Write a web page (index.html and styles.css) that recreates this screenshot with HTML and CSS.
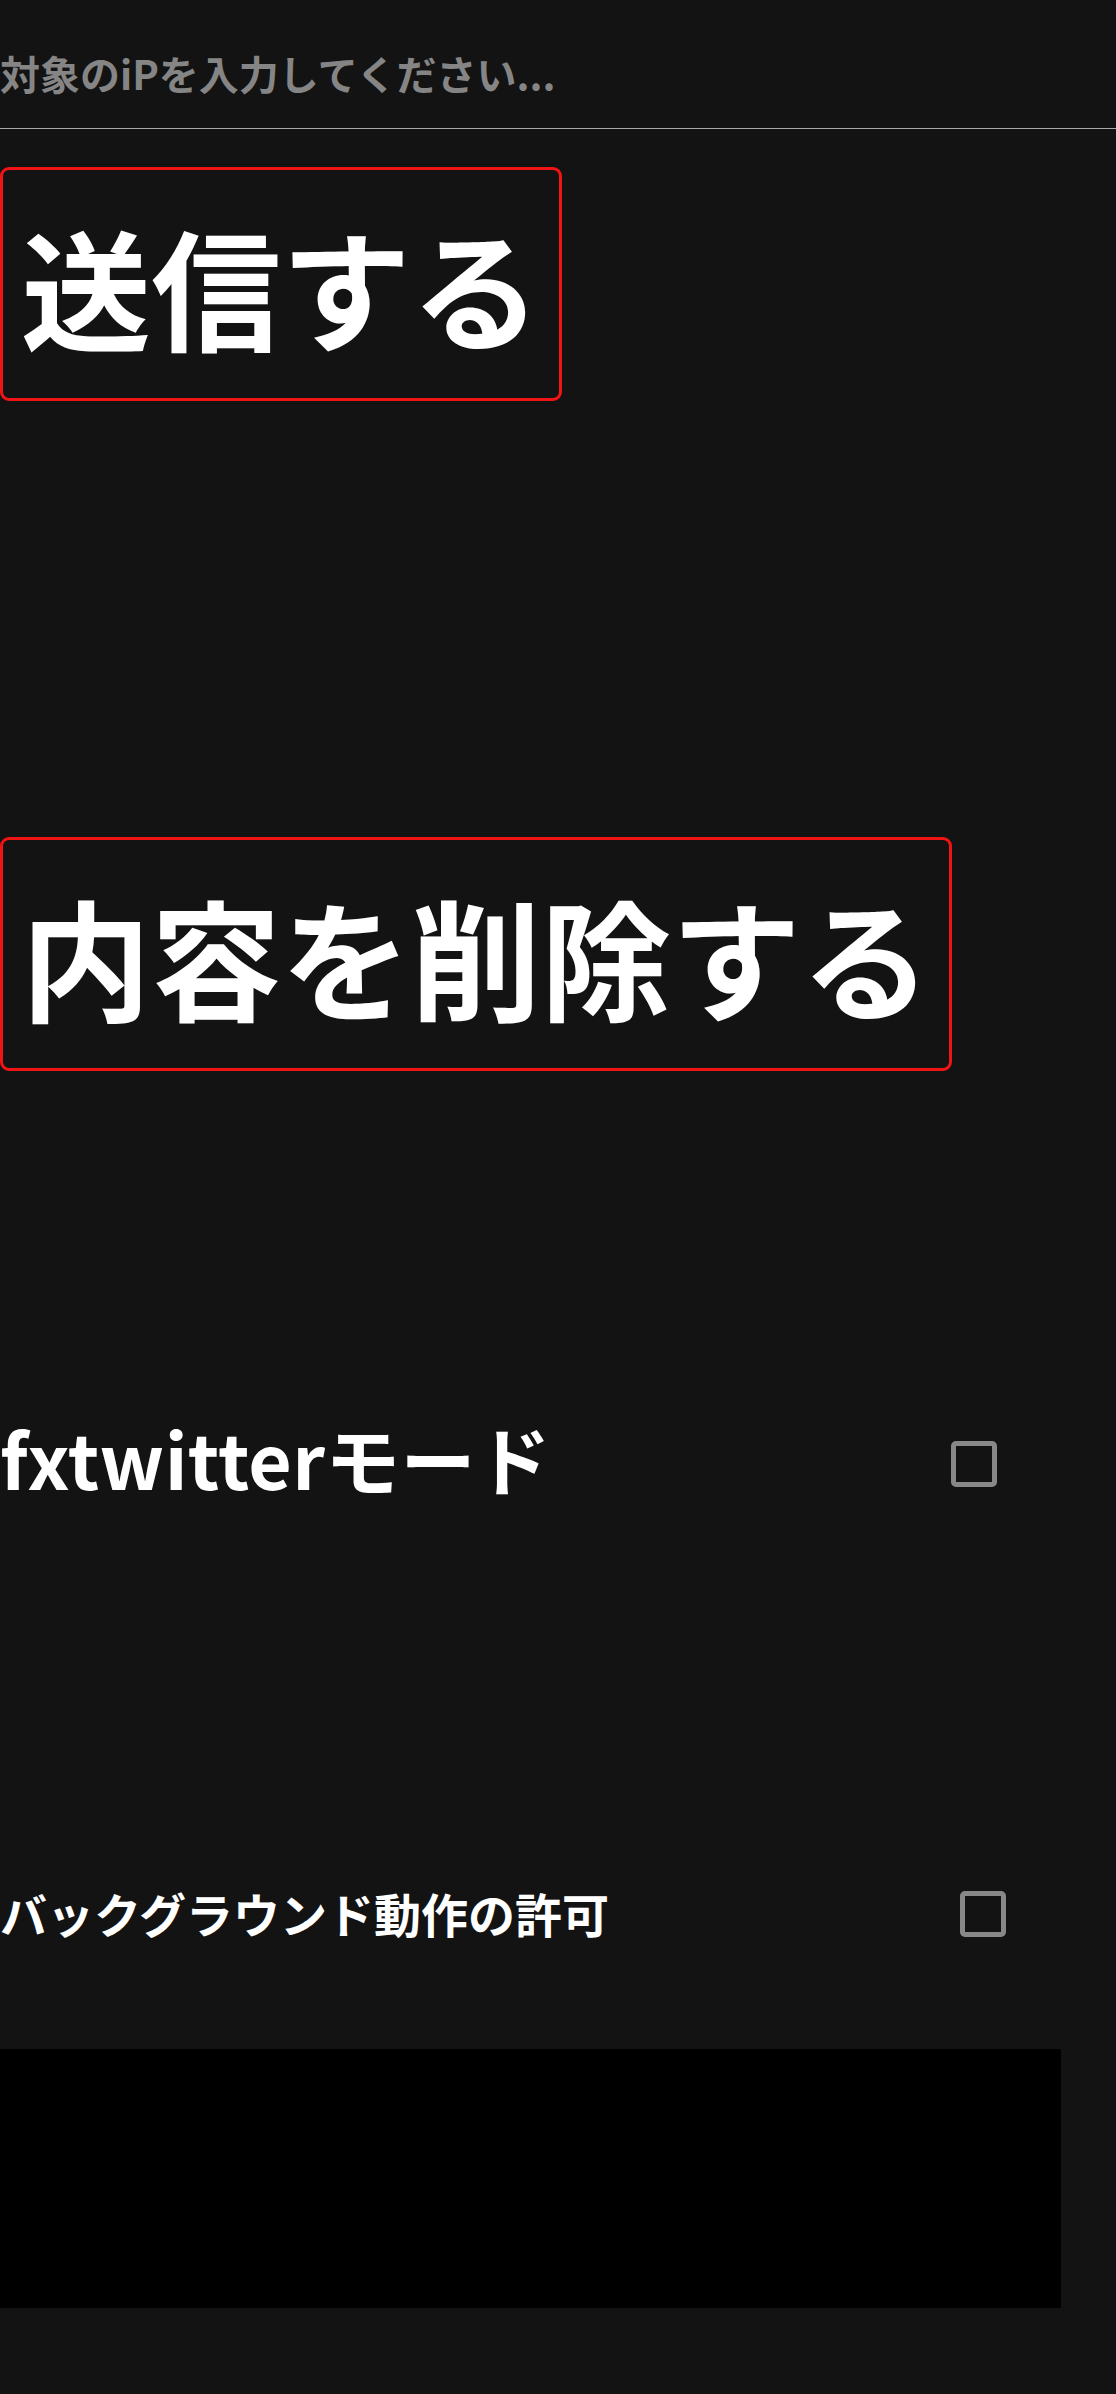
FILE: index.html
```html
<!DOCTYPE html>
<html lang="ja">
<head>
<meta charset="utf-8">
<title>fxtwitter</title>
<link rel="stylesheet" href="styles.css">
</head>
<body>
<main class="page">
  <input class="ip-input" type="text" placeholder="対象のiPを入力してください...">
  <button class="big-btn send-btn" type="button">送信する</button>
  <button class="big-btn clear-btn" type="button">内容を削除する</button>
  <label class="row row-fx">
    <span class="row-label fx-label">fxtwitterモード</span>
    <span class="check check-fx"></span>
  </label>
  <label class="row row-bg">
    <span class="row-label bg-label">バックグラウンド動作の許可</span>
    <span class="check check-bg"></span>
  </label>
  <div class="black-box"></div>
</main>
</body>
</html>
```

FILE: styles.css
```css
html, body {
  margin: 0;
  padding: 0;
  background: #131313;
}

body {
  font-family: "Noto Sans CJK JP", "Noto Sans", sans-serif;
  color: #ffffff;
}

.page {
  display: flex;
  flex-direction: column;
  align-items: flex-start;
  min-height: 2394px;
}

.ip-input {
  display: block;
  width: 100%;
  height: 129px;
  box-sizing: border-box;
  margin: 0;
  padding: 18px 0 0 0;
  border: none;
  border-bottom: 1px solid #a8a8a8;
  background: transparent;
  color: #ffffff;
  font-family: "Noto Sans CJK JP", sans-serif;
  font-size: 40px;
  font-weight: 700;
  outline: none;
}

.ip-input::placeholder {
  color: #858585;
  opacity: 1;
}

.big-btn {
  display: block;
  margin: 0;
  padding: 18px;
  border: 3px solid #f01414;
  border-radius: 9px;
  background: transparent;
  color: #ffffff;
  font-family: "Noto Sans CJK JP", sans-serif;
  font-size: 130px;
  font-weight: 700;
  line-height: 188px;
  box-sizing: border-box;
  height: 234px;
}

.send-btn {
  margin-top: 38px;
}

.clear-btn {
  margin-top: 436px;
}

.row {
  display: flex;
  align-items: center;
  width: 100%;
  height: 200px;
}

.row-fx {
  margin-top: 293px;
}

.row-bg {
  margin-top: 250px;
}

.row-label {
  font-weight: 700;
  color: #ffffff;
}

.fx-label {
  font-size: 75px;
  letter-spacing: 0.3px;
  margin-bottom: 14px;
}

.bg-label {
  font-size: 47px;
  letter-spacing: 0;
  margin-bottom: 4px;
}

.check {
  display: block;
  box-sizing: border-box;
  width: 46px;
  height: 46px;
  border: 5px solid #888888;
  border-radius: 5px;
  margin-left: auto;
}

.check-fx {
  margin-right: 119px;
}

.check-bg {
  margin-right: 110px;
}

.black-box {
  width: 1061px;
  height: 259px;
  margin-top: 35px;
  background: #000000;
}
```
